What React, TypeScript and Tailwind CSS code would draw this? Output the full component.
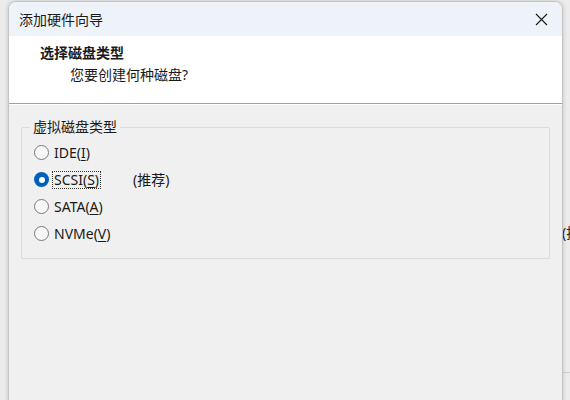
const font = { fontFamily: '"Noto Sans", "Noto Sans CJK SC", sans-serif' };

type Opt = { label: string; key: string; suffix: string; checked?: boolean; note?: string };

const options: Opt[] = [
  { label: "IDE(", key: "I", suffix: ")" },
  { label: "SCSI(", key: "S", suffix: ")", checked: true, note: "(推荐)" },
  { label: "SATA(", key: "A", suffix: ")" },
  { label: "NVMe(", key: "V", suffix: ")" },
];

function Radio({ checked }: { checked?: boolean }) {
  if (checked) {
    return (
      <span className="flex h-[15px] w-[15px] items-center justify-center rounded-full bg-[#005fb8]">
        <span className="h-[6px] w-[6px] rounded-full bg-white" />
      </span>
    );
  }
  return <span className="h-[15px] w-[15px] rounded-full border border-[#7a7a7a] bg-[#f7f7f7]" />;
}

export default function App() {
  return (
    <div className="relative h-[400px] w-[570px] overflow-hidden bg-[#ececec] text-[14px] text-[#1a1a1a]" style={font}>
      {/* bits of the window behind */}
      <div className="absolute left-[562px] top-[226px] leading-none text-[#222]">(推</div>
      <div className="absolute left-[562px] top-[372px] h-px w-[10px] bg-[#cfcfcf]" />

      <div className="absolute left-[8px] top-[1px] flex h-[430px] w-[555px] flex-col overflow-hidden rounded-t-[8px] border border-[#c4c4c4] bg-[#f0f0f0] shadow-[0_0_4px_rgba(0,0,0,0.18)]">
        <div className="flex h-[34px] items-center justify-between bg-[#eef2f9] pl-[10px] pr-[14px]">
          <span>添加硬件向导</span>
          <svg width="13" height="13" viewBox="0 0 13 13" fill="none" stroke="#1a1a1a" strokeWidth="1.1">
            <path d="M1 1L12 12M12 1L1 12" />
          </svg>
        </div>

        <div className="flex h-[67px] flex-col bg-white pl-[31px] pt-[8px]">
          <span className="font-bold leading-[18px]">选择磁盘类型</span>
          <span className="pl-[30px] pt-[4px] leading-[18px]">您要创建何种磁盘?</span>
        </div>
        <div className="h-px bg-[#a0a0a0]" />
        <div className="h-px bg-white" />

        <div className="px-[12px] pt-[14px]">
          <fieldset className="h-[140px] rounded-[2px] border border-[#dcdcdc] pl-[12px] pr-[8px]">
            <legend className="-ml-[4px] bg-[#f0f0f0] px-[3px] leading-[16px]">虚拟磁盘类型</legend>
            <div className="flex flex-col pt-[4px]">
              {options.map((o) => (
                <div key={o.key} className="flex h-[27px] items-center gap-[3px]">
                  <Radio checked={o.checked} />
                  <span
                    className={
                      o.checked
                        ? "border border-dotted border-[#333] px-px leading-[16px]"
                        : "border border-transparent px-px leading-[16px]"
                    }
                  >
                    {o.label}
                    <span className="underline underline-offset-2">{o.key}</span>
                    {o.suffix}
                  </span>
                  {o.note && <span className="ml-[29px]">{o.note}</span>}
                </div>
              ))}
            </div>
          </fieldset>
        </div>
      </div>
    </div>
  );
}
